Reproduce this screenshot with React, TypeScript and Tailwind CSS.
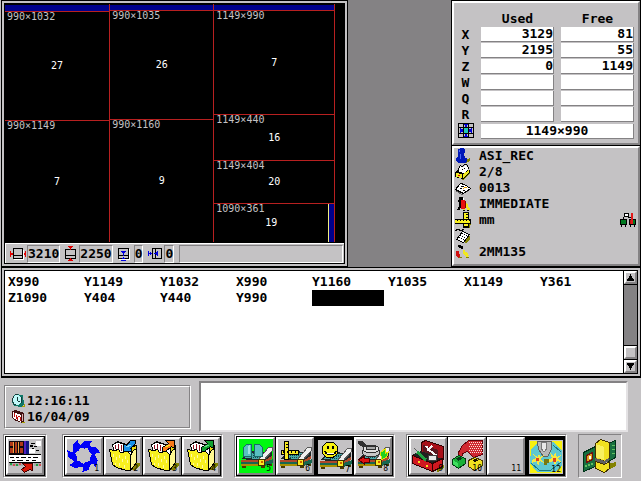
import React from "react";

type Block = { size: string; count: string; grow: number; waste?: boolean };
type Column = { grow: number; trim: number; blocks: Block[] };

const columns: Column[] = [
  {
    grow: 104,
    trim: 6,
    blocks: [
      { size: "990×1032", count: "27", grow: 108 },
      { size: "990×1149", count: "7", grow: 121 },
    ],
  },
  {
    grow: 103,
    trim: 5,
    blocks: [
      { size: "990×1035", count: "26", grow: 108 },
      { size: "990×1160", count: "9", grow: 122 },
    ],
  },
  {
    grow: 120,
    trim: 5,
    blocks: [
      { size: "1149×990", count: "7", grow: 103 },
      { size: "1149×440", count: "16", grow: 45 },
      { size: "1149×404", count: "20", grow: 42 },
      { size: "1090×361", count: "19", grow: 38, waste: true },
    ],
  },
];

const axes = [
  ["X", "3129", "81"],
  ["Y", "2195", "55"],
  ["Z", "0", "1149"],
  ["W", "", ""],
  ["Q", "", ""],
  ["R", "", ""],
];

const cuts = [
  "X990", "Y1149", "Y1032", "X990", "Y1160", "Y1035", "X1149", "Y361",
  "Z1090", "Y404", "Y440", "Y990", "",
];

function Pix({ w = 16, h = 16, children }: { w?: number; h?: number; children: React.ReactNode }) {
  return (
    <svg width={w} height={h} viewBox={`0 0 ${w} ${h}`} shapeRendering="crispEdges" aria-hidden="true" className="block shrink-0">
      {children}
    </svg>
  );
}

/* ---------- small icons ---------- */

const WidthIcon = () => (
  <Pix w={16}>
    <path d="M3.5 2.5h9v10h-9zM3 9.5h10" fill="none" stroke="#000" />
    <path d="M0 5h1v6H0zM1 7h2v2H1zM15 5h1v6h-1zM13 7h2v2h-2z" fill="#e00000" />
    <path d="M4 13.500h9.500V4" fill="none" stroke="#fff" />
  </Pix>
);
const HeightIcon = () => (
  <Pix w={13}>
    <path d="M.5 3.5h10v9H.5zM0 9.5h10" fill="none" stroke="#000" />
    <path d="M3 0h5v1H3zM4 1h3v1H4zM5 2h1v2H5zM5 12h1v1H5zM4 13h3v1H4zM3 14h5v1H3z" fill="#e00000" />
  </Pix>
);
const TrimDownIcon = () => (
  <Pix w={15}>
    <path d="M.5 2.5h10v10H.5zM0 9.5h10" fill="none" stroke="#000" />
    <path d="M3 5h5v1H3zM4 6h3v1H4zM5 7h1v3H5zM4 12h3v1H4zM3 14h5v1H3zM5 11h1v1H5z" fill="#0000e0" />
    <path d="M11.5 3v10.500H1" fill="none" stroke="#fff" />
  </Pix>
);
const TrimSideIcon = () => (
  <Pix w={15}>
    <path d="M4.500 2.500h9v10h-9zM7.500 2v10" fill="none" stroke="#000" />
    <path d="M0 5h1v5H0zM1 7h3v1H1zM2 6h1v3H2zM6 7h4v1H6zM8 6h1v3H8zM9 5h1v5H9z" fill="#0000e0" />
  </Pix>
);
const PanelIcon = () => (
  <Pix>
    <path d="M0 0h16v15H0z" fill="#000" />
    <path d="M1 1h4v3H1zM6 1h4v3H6zM11 1h4v3h-4zM1 5h4v5H1zM11 5h4v5h-4zM1 11h4v3H1zM6 11h4v3H6zM11 11h4v3h-4z" fill="#c4c2c4" />
    <path d="M6 5h4v5H6z" fill="#20c8b8" />
    <path d="M6 1h4v1H6zM7 2h2v2H7zM7 11h2v2H7zM6 13h4v1H6zM2 5h1v5H2zM3 6h2v3H3zM11 6h2v3h-2zM13 5h1v5h-1z" fill="#0000d8" />
  </Pix>
);
const PawnIcon = () => (
  <Pix>
    <path d="M9 11h4l2-1v3l-4 2H8z" fill="#848200" />
    <path d="M5 0h4v1h1v4H9l1 5h2v3l-2 2H3l-2-2v-3l2-1V6L3 4V1h2z" fill="#0018b8" />
    <path d="M4 2h1v2H4zM5 6h1v5H5z" fill="#4868f8" />
  </Pix>
);
const BoxIcon = () => (
  <Pix>
    <path d="M11 12l4-5v3l-7 6H6z" fill="#848200" />
    <path d="M0 8l5-3 10 1v3l-7 6-8-2z" fill="#000" />
    <path d="M1 9l6 1v4l-6-1zM8 10l6-4v3l-6 5z" fill="#f0e820" />
    <path d="M3 7l2-5 3 1 2-2 4 4-5 4-5-1z" fill="#fff" />
    <path d="M5 1h1v1H5zM4 2h1v2H4zM3 4h1v3H3zM6 2h2v1H6zM8 1h1v1H8zM9 0h3v1H9zM12 1h1v2h-1zM13 3h1v2h-1zM7 5h1v1H7zM9 4h1v1H9z" fill="#000" />
    <path d="M3 11h2v1H3z" fill="#e00000" />
  </Pix>
);
const SheetIcon = () => (
  <Pix>
    <path d="M1 10l6 4 8-6v2l-8 5-7-4z" fill="#606060" />
    <path d="M5.500 3.500l4 1 6 4-7 5-8-4z" fill="#fff" stroke="#000" />
    <path d="M6 6h3v1H6zM5 8h2v1H5zM8 10h2v1H8z" fill="#000" />
    <path d="M9 7h3v1H9zM8 8h1v1H8z" fill="#e8a000" />
  </Pix>
);
const WorkerIcon = () => (
  <Pix>
    <path d="M4 1h4v1h1v2H4zM3 4h3v2H3zM4 6h2v6H4zM2 13h3v1H2zM8 13h2v2H8zM12 13h2v2h-2zM3 11h2v2H3z" fill="#000" />
    <path d="M6 4h4v9H6z" fill="#e81010" />
    <path d="M8 2h1v2H8z" fill="#fff" />
    <path d="M10 5h1v7h-1z" fill="#800000" />
    <path d="M11 7h1l2 5h-3zM8 13h2v1H8zM12 12h3v2h-3z" fill="#f0e820" />
  </Pix>
);
const RulerIcon = () => (
  <Pix>
    <path d="M8 0h6v16H8z" fill="#000" />
    <path d="M9 1h4v13H9z" fill="#f8f020" />
    <path d="M0 7h16v5H0z" fill="#000" />
    <path d="M0 8h15v3H0z" fill="#f8f020" />
    <path d="M2 8h1v1H2zM5 8h1v1H5zM8 8h1v1H8zM11 8h1v1h-1zM14 8h1v1h-1zM11 2h2v1h-2zM11 5h2v1h-2z" fill="#000" />
    <path d="M14 12h2v1h-2zM14 13h1v3h-1z" fill="#848200" />
  </Pix>
);
const CalcIcon = () => (
  <Pix>
    <path d="M8 14l7-7v5l-4 3z" fill="#848200" />
    <path d="M7.500 3.500l7 3-6 8-7-3z" fill="#fff" stroke="#000" />
    <path d="M0 3l3-2 3 2 3-2" fill="none" stroke="#000" />
    <path d="M7 5h1v1H7zM9 6h1v1H9zM11 7h1v1h-1zM5 7h1v1H5zM7 8h1v1H7zM9 9h1v1H9zM4 9h1v1H4zM6 10h1v1H6zM8 11h1v1H8z" fill="#000" />
  </Pix>
);
const ArrowsIcon = () => (
  <Pix>
    <path d="M3 1h3v1h2v3H6V4H4V3H3z" fill="#000" />
    <path d="M1 7h3v3l1 1v3H3l-2-3z" fill="#d01010" />
    <path d="M8 6h2v2l3 1 1 3-3 1-1-2-2-1z" fill="#f0e820" />
    <path d="M4 13h3v1H4zM11 13h3v1h-3z" fill="#848200" />
  </Pix>
);
const NetworkIcon = () => (
  <Pix>
    <path d="M4 1h5v4H4zM0 7h7v6H0zM9 7h7v6H9zM1 13h1v2H1zM5 13h1v2H5zM10 13h1v2h-1zM14 13h1v2h-1z" fill="#000" />
    <path d="M5 2h3v2H5z" fill="#fff" />
    <path d="M1 8h5v4H1zM13 8h2v4h-2z" fill="#007820" />
    <path d="M10 8h1v4h-1z" fill="#c01010" />
    <path d="M11 1h2v11h-2z" fill="#e01818" />
    <path d="M3 5h1v2H3zM8 5h3v1H8z" fill="#000" />
  </Pix>
);
const ClockIcon = () => (
  <Pix w={14}>
    <path d="M3 1l8 1 1 9-3 3-7-1-2-4 1-6z" fill="#107868" />
    <path d="M3 2h3l3 3v5l-3 2H3L1 9V4z" fill="#c0f8f8" />
    <path d="M3 1h3v1H3zM1 3h1v2H1zM0 5h1v4H0zM1 9h1v2H1zM2 11h2v1H2zM9 4h1v6H9zM5 4h1v4H5zM6 8h2v1H6z" fill="#183838" />
    <path d="M10 13h3v1h-3zM12 11h1v2h-1z" fill="#a8a000" />
  </Pix>
);
const CalendarIcon = () => (
  <Pix w={14}>
    <path d="M0 2l4-1 8 3v8l-2 2-6-2-4-3z" fill="#401010" />
    <path d="M1 3l8 3v7l-8-4z" fill="#fff" />
    <path d="M10 5h1v7h-1z" fill="#e0b0b0" />
    <path d="M2 4h1v4H2zM4 6h1v4H4zM6 7h2v1H6zM5 8h1v3H5zM8 8h1v4H8z" fill="#c01010" />
    <path d="M10 13h3v1h-3z" fill="#a8a000" />
  </Pix>
);

/* ---------- toolbar pictures ---------- */

const T = ({ children }: { children: React.ReactNode }) => <Pix w={34} h={34}>{children}</Pix>;

const ScreenArt = () => (
  <T>
    <path d="M1 2h19v13H1z" fill="#100810" />
    <path d="M2 3h3v4H2zM7 3h2v11H7zM12 3h3v4h-3zM2 9h3v5H2zM12 9h3v5h-3z" fill="#b03818" />
    <path d="M5 3h1v11H5zM10 3h1v11h-1z" fill="#f0a040" />
    <path d="M16 2h2v13h-2z" fill="#5020c0" />
    <path d="M18 2h3v13h-3z" fill="#101880" />
    <path d="M21 2h12v13H21z" fill="#c8c8c8" />
    <path d="M28 2h5v5h-5zM21 10h6v4h-6zM1 16h32v7H1z" fill="#fff" />
    <path d="M23 4h4v1h-4zM22 6h3v2h-3zM26 7h3v1h-3zM24 9h2v1h-2zM28 11h3v1h-3zM2 18h4v1H2zM8 18h3v1H8zM13 18h5v1h-5zM20 18h3v1h-3zM25 18h5v1h-5zM4 21h3v1H4zM9 21h6v1H9zM18 21h3v1h-3zM24 21h4v1h-4zM1 15h32v1H1zM1 23h32v1H1z" fill="#000" />
    <path d="M1 24h14v3H1zM26 24h7v3h-7z" fill="#a8a8a8" />
    <path d="M2 24h2v2H2zM8 25h2v2H8zM28 25h2v2h-2z" fill="#20a040" />
    <path d="M5 25h2v2H5zM11 24h2v2h-2zM31 25h2v2h-2z" fill="#d05050" />
    <path d="M14.500 24.500h10v7l-3-1-5 3-3-3 4-3z" fill="#d81808" stroke="#400000" />
  </T>
);

const SwirlArt = () => (
  <T>
    <g transform="translate(16.500 16.500)" fill="#0000f8">
      {[10, 61, 113, 164, 216, 267, 319].map((a) => (
        <path key={a} transform={`rotate(${a})`} d="M-6 -7l1-3 4-5 7-1-2 4 1 3-5 2z" />
      ))}
    </g>
  </T>
);

const upRight = "M20.500 1.500h9v8l-3-2-6 5h-3v-4l6-4z";
const downLeft = "M17.500 12.500v-8l3 2 4-5h5v3l-5 5 2 3z";

const FolderArt = ({ arrow, shine, d }: { arrow: string; shine: string; d: string }) => (
  <T>
    <path d="M25 31l3-8 6 1v3l-5 4z" fill="#848200" />
    <path d="M8.500 4.500l3-2 15 5 4-1-2 19-5 6z" fill="#e8d810" stroke="#000" />
    <path d="M6.500 5.500l5-2 14 3v14l-16-2z" fill="#fff" stroke="#000" />
    <path d="M9 6h1v4H9zM12 5h1v6h-1zM15 6h1v6h-1zM18 7h1v5h-1z" fill="#901020" />
    <path d="M3.500 10.500l5 1 4-1 2 3 7-1 3 3v16h-4l-10-3-4-3z" fill="#f8f020" stroke="#000" />
    <path d="M24.500 16.500l3-5 3-2v14l-6 8z" fill="#fff890" stroke="#000" />
    <path d="M7 15h1v3H7zM10 18h1v3h-1zM13 16h1v3h-1zM16 20h1v3h-1zM19 17h1v3h-1zM9 24h1v2H9zM13 24h1v3h-1zM18 26h1v3h-1zM21 21h1v3h-1z" fill="#fff8a0" />
    <path d={d} fill={arrow} stroke="#000" />
    <path d="M22 6h3v1h-3zM20 7h3v1h-3z" fill={shine} />
  </T>
);

const Machine = () => (
  <>
    <path d="M3 20l7-8 23 1v6l-7 4z" fill="#202828" />
    <path d="M5 19l5-5h17l-6 6z" fill="#48a8a8" />
    {[0, 1, 2, 3, 4, 5, 6].map((i) => (
      <path key={i} d={`M${6 + i * 2} ${14 + (i % 2)}h14`} stroke="#104848" strokeDasharray="1 3" transform={`translate(0 ${i % 5})`} />
    ))}
    <path d="M2 21h24l7-4v3l-6 3H2z" fill="#b04828" />
    <path d="M2 23h24l8-3v4l-8 3H2z" fill="#186850" />
    <path d="M2 25h24v2H2z" fill="#a89000" />
    <path d="M3 27h4v2H3zM22 27h4v2h-4zM30 25h3v2h-3z" fill="#483800" />
    <path d="M19.500 20.500l10-12h4v3l-10 11h-4z" fill="#f0f0f0" stroke="#585858" />
    <path d="M19.500 20.500h6v6h-6z" fill="#f8e820" stroke="#403000" />
    <path d="M22 22h2v2h-2z" fill="#d06000" />
  </>
);

const SheetsArt = () => (
  <T>
    <Machine />
    <path d="M4.500 8.500l3-3h5v12h-8zM15.500 5.500h5l3 3v9h-8z" fill="#58c0c0" stroke="#186868" />
    <path d="M9 7l2-1v9H9z" fill="#a0e0e0" />
  </T>
);
const MeasureArt = () => (
  <T>
    <Machine />
    <path d="M6.500 2.500h4v18h-4zM3.500 11.500h17v4h-17z" fill="#f8e820" stroke="#000" />
    <path d="M8 4h2v1H8zM8 7h2v1H8zM7 11h3v5H7z" fill="#f8e820" />
    <path d="M8 5h2v1H8zM8 8h2v1H8zM5 12h1v2H5zM9 12h1v2H9zM13 12h1v2h-1zM17 12h1v2h-1z" fill="#000" />
  </T>
);
const SmileArt = () => (
  <T>
    <Machine />
    <circle cx="12" cy="10" r="8" fill="#f8f010" stroke="#000" />
    <path d="M9 6h2v3H9zM14 6h2v3h-2zM6 11h2v1h1v1h7v-1h1v-1h2v1h-1v2h-2v1H9v-1H7v-2H6z" fill="#000" />
    <path d="M9 13h7v1H9z" fill="#fff" />
  </T>
);
const InspectArt = () => (
  <T>
    <Machine />
    <path d="M2.500 20.500l6-3v2h5v4h-5v2z" fill="#e01010" stroke="#500000" />
    <path d="M24.500 13.500l5-4v5l3-2-2 6-5 2z" fill="#20d020" stroke="#e8e000" />
    <path d="M2 2h4l5 5-3 2-6-4z" fill="#303030" />
    <ellipse cx="15" cy="13" rx="9" ry="5" fill="#c8c8c8" stroke="#303030" />
    <ellipse cx="15" cy="10" rx="8" ry="4" fill="#e0e0e0" stroke="#303030" />
    <ellipse cx="15" cy="9" rx="5" ry="2" fill="#a8a8a8" stroke="#303030" />
  </T>
);
const ToolboxArt = () => (
  <T>
    <path d="M25 32l8-6v3l-6 4z" fill="#848200" />
    <path d="M10.500 3.500l4-2 18 6v13l-5 1-17-8z" fill="#a81018" stroke="#300000" />
    <path d="M12 6l15 5v9l-15-7z" fill="#581820" />
    <path d="M1 16l9-4 21 8-9 6z" fill="#202020" />
    <path d="M1.500 16.500l20 8v8l-20-8zM21.500 24.500l10-5v8l-10 5z" fill="#d01820" stroke="#300000" />
    <path d="M3 9l4 4" stroke="#606060" strokeWidth="1" />
    <path d="M6 13l9 8" stroke="#20a040" strokeWidth="3" />
    <path d="M15 7l3 4 8 6M16 12l5-5" stroke="#f8f8f8" strokeWidth="2" fill="none" />
    <path d="M17.500 16.500h8v5h-8z" fill="#e8e8e8" stroke="#404040" />
    <path d="M7 22h2v2H7zM15 26h2v2h-2z" fill="#f8e020" />
  </T>
);
const HandArt = () => (
  <T>
    <path d="M12.500 6.500l6-5h14v14l-9 3-6-6-5 2-1 5h-3v-6z" fill="#d02830" stroke="#600008" />
    {[0, 1, 2, 3, 4, 5].map((i) => (
      <path key={i} d={`M${19 + (i % 2)} ${3.5 + i * 2}h13`} stroke="#f8e0d8" strokeDasharray="1 1" />
    ))}
    <path d="M2.500 20.500l6-4 7 3v5l-7 5-6-4z" fill="#18b038" stroke="#003810" />
    <path d="M6 19l4-1 2 2-4 2z" fill="#083818" />
    <path d="M3 21l5 3v4l-5-3z" fill="#40e060" />
    <path d="M18.500 21.500l6-3 8 3v5l-8 5-6-4z" fill="#f0e020" stroke="#483800" />
    <path d="M22 21l4-1 2 2-4 1z" fill="#181000" />
  </T>
);
const CutterArt = () => (
  <T>
    <path d="M1 1h32v32H1z" fill="#f8f010" />
    <path d="M2 9l8-7h14l9 9v15l-7 6H8l-7-9z" fill="#60c8d0" />
    <path d="M2 23l8 7h12l10-8M24 5l8 7" fill="none" stroke="#187880" />
    <path d="M8 1h14v9l-3 6h-5l-4-6z" fill="#b8b8b8" stroke="#606060" />
    <path d="M13 2h4l1 6-2 3h-2l-2-3z" fill="#e8e8e8" stroke="#787878" />
    <path d="M3 20l4-2-3-4 5 3 1-4 1 4 4-2-3 4 3 4-4-2-2 5-1-5-5 2zM19 20l4-2-2-5 4 4 1-5 2 5 4-2-3 4 3 3-4-1-2 4-2-4-5 2z" fill="#f8e840" />
    <path d="M7 18h3v3H7zM24 18h3v4h-3z" fill="#e04020" />
    <path d="M15 19h5v4h-2v2h-3z" fill="#787810" />
  </T>
);
const ModuleArt = () => (
  <T>
    <path d="M24 25l9-2v4l-8 4z" fill="#848200" />
    <path d="M.5 13.500l12-6v20l-12 5zM25.500 4.500l7-3v17l-7 4z" fill="#187040" stroke="#003018" />
    <path d="M3.500 16.500l6-3v7l-6 3z" fill="#e0a020" stroke="#701010" />
    <path d="M6 17h2v3H6z" fill="#fff" />
    <path d="M2 26h2v2H2zM5 25h2v2H5zM8 24h2v2H8zM29 6h3v1h-3zM29 10h3v1h-3zM29 14h3v1h-3z" fill="#60c060" />
    <path d="M12.500 4.500l5-4 9 3v16l-4 3-10-3z" fill="#f0e020" stroke="#403000" />
    <path d="M13 5l8 3v13l-8-3z" fill="#f8f060" />
    <path d="M12.500 22.500l9 3 5-3v7l-5 4-9-4z" fill="#f0e020" stroke="#403000" />
    <path d="M12 19l9 3 5-3v3l-5 3-9-3z" fill="#606060" />
  </T>
);

/* ---------- controls ---------- */

type Tool = { label: string; no?: string; art?: React.ReactNode; pressed?: boolean; green?: boolean };

function ToolButton({ label, no, art, pressed, green }: Tool) {
  const look = pressed
    ? "border-t-[3px] border-l-[3px] border-r border-b border-black"
    : "border-2 border-t-white border-l-white border-r-[#848284] border-b-[#848284]";
  return (
    <button
      type="button"
      aria-label={label}
      aria-pressed={pressed ? true : undefined}
      className={`relative h-[38px] w-[38px] shrink-0 overflow-hidden ${look} ${green ? "bg-[#00f810]" : "bg-[#c4c2c4]"}`}
    >
      {art}
      {no && <span className="absolute right-0.5 bottom-0 text-[8px] leading-[8px] font-normal">{no}</span>}
    </button>
  );
}

function ToolGroup({ tools }: { tools: Tool[] }) {
  return (
    <div className="border border-t-[#848284] border-r-white border-b-white border-l-[#848284]">
      <div className="border border-t-white border-r-[#848284] border-b-[#848284] border-l-white">
        <div className="flex gap-px border border-black bg-black">
          {tools.map((t) => (
            <ToolButton key={t.label} {...t} />
          ))}
        </div>
      </div>
    </div>
  );
}

function Reading({ icon, label, value }: { icon: React.ReactNode; label: string; value: string }) {
  return (
    <div className="flex items-center gap-px" title={label}>
      {icon}
      <output aria-label={label} className="h-[18px] border border-t-[#848284] border-r-white border-b-white border-l-[#848284] leading-4">
        {value}
      </output>
    </div>
  );
}

const field = "h-[15px] border-r border-b border-[#848284] bg-white text-[13px] leading-[14px]";
const raised = "border-2 border-t-white border-l-white border-r-[#848284] border-b-[#848284]";

function Layout() {
  return (
    <div className="flex min-w-0 flex-[347] flex-col border border-black bg-black">
      <div className="flex grow flex-col border-2 border-[#c4c2c4] bg-black pt-px pl-px">
        <div className="flex grow bg-black text-[10px] leading-[10px] font-normal">
          {columns.map((c, i) => (
            <div key={i} className="flex basis-0 flex-col border-r border-[#b82020]" style={{ flexGrow: c.grow }}>
              <div className="flex basis-0 flex-col pt-px" style={{ flexGrow: c.trim }}>
                <div className="grow bg-[#00008c]" />
              </div>
              {c.blocks.map((b) => (
                <div key={b.size} className="flex basis-0 border-t border-[#b82020]" style={{ flexGrow: b.grow }}>
                  <div className="grid grow">
                    <span className="col-start-1 row-start-1 pl-0.5 text-[#c4c2c4]">{b.size}</span>
                    <span className="col-start-1 row-start-1 self-center text-center text-white">{b.count}</span>
                  </div>
                  {b.waste && <div className="w-1.5 border-l border-[#f0f080] bg-[#00008c]" />}
                </div>
              ))}
            </div>
          ))}
          <div className="basis-0" style={{ flexGrow: 10 }} />
        </div>
        <div className="border-y border-r border-black">
          <div className="flex h-5 items-center gap-[5px] border-t border-l border-white bg-[#c4c2c4] pr-px pl-1">
            <Reading icon={<WidthIcon />} label="Sheet width" value="3210" />
            <Reading icon={<HeightIcon />} label="Sheet height" value="2250" />
            <Reading icon={<TrimDownIcon />} label="Bottom trim" value="0" />
            <Reading icon={<TrimSideIcon />} label="Side trim" value="0" />
            <div className="h-[18px] grow border border-t-[#848284] border-r-white border-b-white border-l-[#848284]" />
          </div>
        </div>
      </div>
    </div>
  );
}

function Usage() {
  return (
    <div className="border-x border-t border-black bg-[#c4c2c4]">
      <div className={`${raised} pt-2 pr-1 pb-1`}>
        <table className="w-full table-fixed border-collapse">
          <colgroup>
            <col className="w-[27px]" />
            <col />
            <col className="w-[7px]" />
            <col />
          </colgroup>
          <thead>
            <tr className="leading-4">
              <td />
              <th scope="col" className="p-0">Used</th>
              <td />
              <th scope="col" className="p-0">Free</th>
            </tr>
          </thead>
          <tbody>
            {axes.map(([axis, used, free]) => (
              <tr key={axis} className="h-4">
                <th scope="row" className="p-0 pr-1 leading-4">{axis}</th>
                <td className="p-0 align-top"><div className={`${field} text-right`}>{used}</div></td>
                <td className="p-0" />
                <td className="p-0 align-top"><div className={`${field} text-right`}>{free}</div></td>
              </tr>
            ))}
            <tr className="h-4">
              <th scope="row" aria-label="Panel" className="p-0 pr-1"><div className="flex justify-center"><PanelIcon /></div></th>
              <td colSpan={3} className="p-0"><div className={`${field} text-center`}>1149×990</div></td>
            </tr>
          </tbody>
        </table>
      </div>
    </div>
  );
}

const info: [React.ReactNode, string][] = [
  [<PawnIcon />, "ASI_REC"],
  [<BoxIcon />, "2/8"],
  [<SheetIcon />, "0013"],
  [<WorkerIcon />, "IMMEDIATE"],
  [<RulerIcon />, "mm"],
  [<CalcIcon />, ""],
  [<ArrowsIcon />, "2MM135"],
];

function Status() {
  return (
    <div className="flex grow flex-col border border-black bg-[#c4c2c4]">
      <ul className={`grow ${raised} pb-1`}>
        {info.map(([icon, text], i) => (
          <li key={i} className="flex h-4 items-center gap-2 pr-0.5 pl-px leading-4">
            {icon}
            <span className="grow">{text}</span>
            {text === "mm" && <NetworkIcon />}
          </li>
        ))}
      </ul>
    </div>
  );
}

function CutList() {
  return (
    <section aria-label="Cut list" className="flex grow flex-col border border-b-2 border-black bg-black">
      <div className="flex grow border-2 border-[#c4c2c4] bg-black p-px">
        <ul className="grid grow auto-rows-[16px] grid-cols-[repeat(auto-fill,76px)] content-start bg-white pt-[3px] pl-[3px] leading-4">
          {cuts.map((c, i) => (
            <li key={i} className={c ? "" : "mr-1 bg-black"}>{c}</li>
          ))}
        </ul>
        <div className="ml-px flex w-[13px] flex-col gap-px bg-black">
          <button type="button" aria-label="Scroll up" className={`flex h-[13px] items-center justify-center bg-[#c4c2c4] ${raised}`}>
            <Pix w={7} h={7}><path d="M3 0h1v2h1v2h1v1h1v2H0V5h1V4h1V2h1z" fill="#000" /></Pix>
          </button>
          <div className="grow bg-[#848284]" />
          <div className={`h-[13px] bg-[#c4c2c4] ${raised}`} />
          <button type="button" aria-label="Scroll down" className={`flex h-[13px] items-center justify-center bg-[#c4c2c4] ${raised}`}>
            <Pix w={7} h={7}><path d="M0 0h7v2H6v1H5v2H4v2H3V5H2V3H1V2H0z" fill="#000" /></Pix>
          </button>
        </div>
      </div>
    </section>
  );
}

export default function App() {
  return (
    <main className="flex min-h-screen flex-col bg-[#c4c2c4] pl-px font-['DejaVu_Sans_Mono','Liberation_Mono',monospace] text-[13px] font-bold text-black">
      <div className="flex bg-[#848284]">
        <Layout />
        <div className="flex-[103]" />
        <aside className="flex w-[190px] shrink-0 flex-col">
          <Usage />
          <Status />
        </aside>
      </div>
      <CutList />
      <div className="flex items-center gap-2 pt-[3px] pr-[13px] pl-[3px]">
        <div className="w-[187px] shrink-0 border border-t-[#848284] border-r-white border-b-white border-l-[#848284]">
          <div className="border border-t-white border-r-[#848284] border-b-[#848284] border-l-white pt-1.5 pb-0.5 pl-1.5 leading-4">
            <div className="flex items-center gap-px"><ClockIcon /><time>12:16:11</time></div>
            <div className="flex items-center gap-px"><CalendarIcon /><time>16/04/09</time></div>
          </div>
        </div>
        <input
          type="text"
          aria-label="Message"
          className="h-[51px] min-w-0 grow border-2 border-t-[#848284] border-r-[#e4e2e4] border-b-[#e4e2e4] border-l-[#848284] bg-white px-1 outline-none"
        />
      </div>
      <div className="flex gap-[11px] pt-0.5 pb-[3px] pl-0.5">
        <div className="mr-1">
          <ToolGroup tools={[{ label: "Main screen", art: <ScreenArt /> }]} />
        </div>
        <ToolGroup
          tools={[
            { label: "Cycle", no: "1", art: <SwirlArt /> },
            { label: "Load program", no: "2", art: <FolderArt arrow="#1890e8" shine="#80d8f8" d={downLeft} /> },
            { label: "Next program", no: "3", art: <FolderArt arrow="#f87818" shine="#f8e020" d={upRight} /> },
            { label: "Save program", no: "4", art: <FolderArt arrow="#10a030" shine="#60e080" d={upRight} /> },
          ]}
        />
        <ToolGroup
          tools={[
            { label: "Panels", no: "5", art: <SheetsArt />, green: true },
            { label: "Measure", no: "6", art: <MeasureArt /> },
            { label: "Automatic", no: "7", art: <SmileArt />, pressed: true },
            { label: "Inspect", no: "8", art: <InspectArt /> },
          ]}
        />
        <ToolGroup
          tools={[
            { label: "Tools", no: "9", art: <ToolboxArt /> },
            { label: "Manual", no: "10", art: <HandArt /> },
            { label: "Function", no: "11" },
            { label: "Cutting", no: "12", art: <CutterArt />, pressed: true },
          ]}
        />
        <button type="button" aria-label="Modules" className="flex h-11 w-11 items-center justify-center border border-t-[#848284] border-r-white border-b-white border-l-[#848284]">
          <ModuleArt />
        </button>
      </div>
    </main>
  );
}
